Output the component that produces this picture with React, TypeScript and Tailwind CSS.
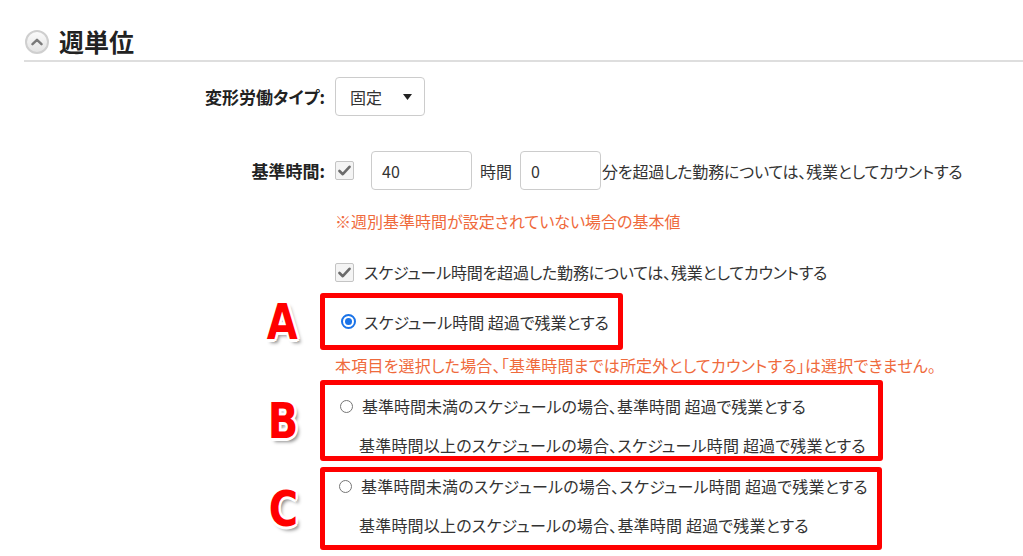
import React from "react";

const FONT = '"Noto Sans CJK JP", "Noto Sans", sans-serif';

function Checkbox() {
  return (
    <span className="inline-flex h-[19px] w-[19px] shrink-0 items-center justify-center rounded-[2px] border border-[#c4c4c4] bg-[#f4f4f4]">
      <svg width="13" height="11" viewBox="0 0 13 11">
        <path d="M1.5 6 L4.8 9.2 L11.5 1.8" fill="none" stroke="#6b6b6b" strokeWidth="2.6" strokeLinecap="round" strokeLinejoin="round" />
      </svg>
    </span>
  );
}

function Radio({ checked }: { checked?: boolean }) {
  if (checked) {
    return (
      <span className="inline-flex h-[15px] w-[15px] shrink-0 items-center justify-center rounded-full border-[2px] border-[#1a73e8] bg-white">
        <span className="h-[7px] w-[7px] rounded-full bg-[#1a73e8]" />
      </span>
    );
  }
  return <span className="inline-block h-[13px] w-[13px] shrink-0 rounded-full border border-[#767676] bg-white" />;
}

function Letter({ ch }: { ch: string }) {
  return (
    <div className="flex w-[296px] shrink-0 items-center justify-end pr-[18px]">
      <span
        className="inline-block origin-center scale-x-[0.8] text-[50px] leading-none font-bold text-[#ff0000] [text-shadow:2px_0_#fff,-2px_0_#fff,0_2px_#fff,0_-2px_#fff,2px_2px_#fff,-2px_-2px_#fff,2px_-2px_#fff,-2px_2px_#fff,3px_0_#fff,-3px_0_#fff,0_3px_#fff,0_-3px_#fff,4px_4px_4px_rgba(0,0,0,0.45)]"
        style={{ fontFamily: '"DejaVu Sans", "Liberation Sans", sans-serif' }}
      >
        {ch}
      </span>
    </div>
  );
}

export default function App() {
  return (
    <div
      className="h-[556px] w-[1023px] overflow-hidden bg-white text-[16px] text-[#333] [font-feature-settings:'palt']"
      style={{ fontFamily: FONT }}
    >
      <div className="pl-[24px]">
        {/* Header */}
        <div className="flex h-[62px] items-start border-b-[2px] border-[#dedede] pt-[27px]">
          <div className="flex items-center gap-[10px]">
            <span className="ml-[1px] inline-flex h-[24px] w-[24px] items-center justify-center rounded-full border-[2px] border-[#cfcfcf] bg-gradient-to-b from-[#fafafa] to-[#e4e4e4]">
              <svg width="12" height="8" viewBox="0 0 12 8">
                <path d="M1.5 6.2 L6 1.8 L10.5 6.2" fill="none" stroke="#7a7a7a" strokeWidth="2.4" strokeLinecap="round" strokeLinejoin="round" />
              </svg>
            </span>
            <span className="text-[25px] leading-[29px] font-bold text-[#222]">週単位</span>
          </div>
        </div>

        {/* 変形労働タイプ */}
        <div className="mt-[15px] flex items-center">
          <div className="w-[301px] shrink-0 text-right text-[17px] font-bold text-[#222]">変形労働タイプ:</div>
          <div className="ml-[10px] flex h-[39px] w-[90px] items-center justify-between rounded-[4px] border border-[#cccccc] bg-white pr-[12px] pl-[14px]">
            <span className="text-[#333]">固定</span>
            <svg width="9" height="6" viewBox="0 0 9 6">
              <path d="M0 0 L9 0 L4.5 6 Z" fill="#222" />
            </svg>
          </div>
        </div>

        {/* 基準時間 */}
        <div className="mt-[35px] flex items-center">
          <div className="w-[301px] shrink-0 text-right text-[17px] font-bold text-[#222]">基準時間:</div>
          <div className="ml-[10px] flex items-center">
            <Checkbox />
            <div className="ml-[17px] flex h-[39px] w-[101px] items-center rounded-[4px] border border-[#cccccc] pl-[10px] text-[#333]">40</div>
            <span className="ml-[8px]">時間</span>
            <div className="ml-[8px] flex h-[39px] w-[81px] items-center rounded-[4px] border border-[#cccccc] pl-[10px] text-[#333]">0</div>
            <span className="ml-[1px] tracking-[-0.2px]">分を超過した勤務については、残業としてカウントする</span>
          </div>
        </div>

        <div className="mt-[21px] ml-[311px] leading-[20px] text-[#ef6a3c]">※週別基準時間が設定されていない場合の基本値</div>

        <div className="mt-[31px] ml-[311px] flex h-[20px] items-center">
          <Checkbox />
          <span className="ml-[10px] tracking-[-0.2px]">スケジュール時間を超過した勤務については、残業としてカウントする</span>
        </div>

        {/* A */}
        <div className="mt-[11px] flex items-center">
          <Letter ch="A" />
          <div className="flex h-[57px] w-[303px] items-center rounded-[3px] border-[5px] border-[#ff0000] pl-[16px]">
            <Radio checked />
            <span className="ml-[8px]">スケジュール時間 超過で残業とする</span>
          </div>
        </div>

        <div className="mt-[5px] ml-[311px] leading-[20px] tracking-[0.2px] text-[#ef6a3c]">
          本項目を選択した場合、「基準時間までは所定外としてカウントする」は選択できません。
        </div>

        {/* B */}
        <div className="mt-[5px] flex items-center">
          <Letter ch="B" />
          <div className="h-[81px] w-[563px] rounded-[3px] border-[5px] border-[#ff0000] pt-[11px] pl-[15px]">
            <div className="flex h-[20px] items-center">
              <Radio />
              <span className="ml-[9px]">基準時間未満のスケジュールの場合、基準時間 超過で残業とする</span>
            </div>
            <div className="mt-[19px] h-[20px] pl-[19px] leading-[20px] tracking-[0.2px]">基準時間以上のスケジュールの場合、スケジュール時間 超過で残業とする</div>
          </div>
        </div>

        {/* C */}
        <div className="mt-[6px] flex items-center">
          <Letter ch="C" />
          <div className="h-[83px] w-[562px] rounded-[3px] border-[5px] border-[#ff0000] pt-[4px] pl-[14px]">
            <div className="flex h-[20px] items-center">
              <Radio />
              <span className="ml-[9px] tracking-[0.2px]">基準時間未満のスケジュールの場合、スケジュール時間 超過で残業とする</span>
            </div>
            <div className="mt-[19px] h-[20px] pl-[20px] leading-[20px] tracking-[0.2px]">基準時間以上のスケジュールの場合、基準時間 超過で残業とする</div>
          </div>
        </div>
      </div>
    </div>
  );
}
